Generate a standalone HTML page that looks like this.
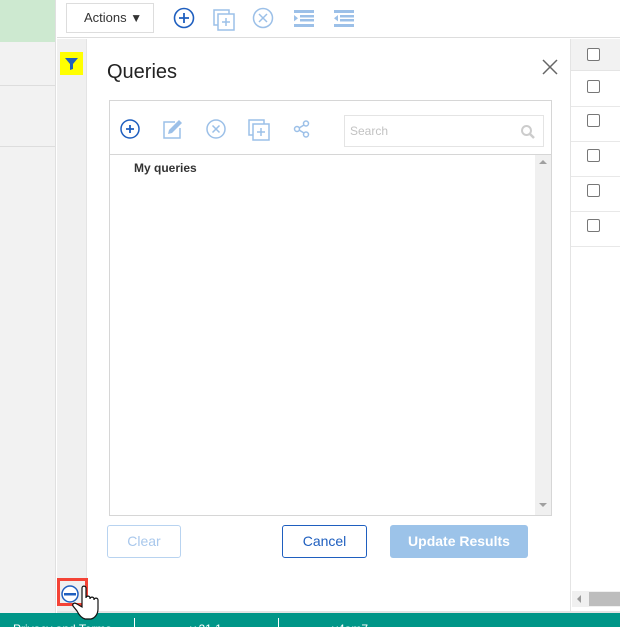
<!DOCTYPE html>
<html><head><meta charset="utf-8"><style>
*{box-sizing:border-box;margin:0;padding:0}
body{width:620px;height:627px;overflow:hidden;position:relative;background:#fff;font-family:"Liberation Sans",Arial,sans-serif}
.a{position:absolute}
</style></head><body>
<div class="a" style="left:0;top:0;width:56px;height:613px;background:#f2f2f2;border-right:1px solid #e0e0e0"></div>
<div class="a" style="left:0;top:0;width:55px;height:42px;background:#cde9d0"></div>
<div class="a" style="left:0;top:85px;width:55px;height:1px;background:#ddd"></div>
<div class="a" style="left:0;top:146px;width:55px;height:1px;background:#ddd"></div>
<div class="a" style="left:57px;top:0;width:563px;height:38px;background:#fff;border-bottom:1px solid #ddd"></div>
<div class="a" style="left:66px;top:3px;width:88px;height:30px;border:1px solid #ddd;font-size:13px;color:#333;line-height:28px;padding-left:17px">Actions <span style="font-size:12px">▼</span></div>
<svg class="a" style="left:170px;top:4px" width="190" height="28" viewBox="0 0 190 28">
<circle cx="14" cy="14" r="9.5" fill="none" stroke="#1f5fbf" stroke-width="1.6"/><path d="M14 9v10M9 14h10" stroke="#1f5fbf" stroke-width="1.8"/>
<g stroke="#9cc0e8" fill="none" stroke-width="1.5"><rect x="44" y="6" width="15" height="15"/><rect x="48" y="10" width="16" height="16" fill="#fff"/><path d="M56 14v8M52 18h8"/>
<circle cx="93" cy="14" r="9.5"/><path d="M89 10l8 8M97 10l-8 8"/></g>
<g fill="#9cc0e8"><rect x="124" y="6" width="20" height="3"/><rect x="130" y="11" width="14" height="2.5"/><rect x="130" y="15" width="14" height="2.5"/><rect x="124" y="20" width="20" height="3"/><path d="M124 11l4 3.2-4 3.2z"/>
<rect x="164" y="6" width="20" height="3"/><rect x="170" y="11" width="14" height="2.5"/><rect x="170" y="15" width="14" height="2.5"/><rect x="164" y="20" width="20" height="3"/><path d="M168 11l-4 3.2 4 3.2z"/></g>
</svg>
<div class="a" style="left:57px;top:39px;width:30px;height:574px;background:#f0f0f0;border-right:1px solid #e4e4e4"></div>
<div class="a" style="left:60px;top:52px;width:23px;height:23px;background:#ffff00"></div>
<svg class="a" style="left:64px;top:56px" width="15" height="15"><path d="M1 2h13l-5 6v5l-3 1V8z" fill="#1f5fbf"/></svg>
<div class="a" style="left:107px;top:61px;font-size:20px;color:#222">Queries</div>
<svg class="a" style="left:542px;top:59px" width="16" height="16"><path d="M1 1l14 14M15 1L1 15" stroke="#666" stroke-width="1.5"/></svg>
<div class="a" style="left:109px;top:100px;width:443px;height:416px;border:1px solid #d6d6d6"></div>
<div class="a" style="left:110px;top:154px;width:441px;height:1px;background:#d6d6d6"></div>
<svg class="a" style="left:118px;top:116px" width="200" height="28">
<circle cx="12" cy="13" r="9" fill="none" stroke="#1f5fbf" stroke-width="1.5"/><path d="M12 9v8M8 13h8" stroke="#1f5fbf" stroke-width="1.8"/>
<g stroke="#9cc0e8" fill="none" stroke-width="1.5"><path d="M57 6H46v16h16V12"/></g>
<path d="M50 18l1-4 10-10 3 3-10 10z" fill="#9cc0e8"/>
<g stroke="#9cc0e8" fill="none" stroke-width="1.5"><circle cx="98" cy="13" r="9"/><path d="M94.5 9.5l7 7M101.5 9.5l-7 7"/>
<rect x="131" y="4" width="15" height="15"/><rect x="135" y="8" width="16" height="16" fill="#fff"/><path d="M143 12v8M139 16h8"/>
<circle cx="179" cy="13" r="2.5"/><circle cx="188" cy="7.5" r="2.5"/><circle cx="188" cy="18.5" r="2.5"/><path d="M181 12l5-3M181 14l5 3"/></g>
</svg>
<div class="a" style="left:344px;top:115px;width:200px;height:32px;border:1px solid #e4e4e4;font-size:12px;color:#c2c2c2;padding:8px 5px">Search</div>
<svg class="a" style="left:520px;top:124px" width="16" height="16"><circle cx="6.5" cy="6.5" r="4.5" fill="none" stroke="#ccc" stroke-width="2"/><path d="M10 10l4 4" stroke="#ccc" stroke-width="2.5"/></svg>
<div class="a" style="left:134px;top:161px;font-size:12px;font-weight:bold;color:#333">My queries</div>
<div class="a" style="left:535px;top:155px;width:16px;height:360px;background:#f0f0f0"></div>
<div class="a" style="left:539px;top:160px;border:4px solid transparent;border-bottom:4px solid #a0a0a0;border-top:0"></div>
<div class="a" style="left:539px;top:503px;border:4px solid transparent;border-top:4px solid #a0a0a0;border-bottom:0"></div>
<div class="a" style="left:107px;top:525px;width:74px;height:33px;border:1px solid #b8d3f0;border-radius:3px;color:#a9c8ec;font-size:14px;text-align:center;line-height:31px">Clear</div>
<div class="a" style="left:282px;top:525px;width:85px;height:33px;border:1px solid #1f5fbf;border-radius:3px;color:#1f5fbf;font-size:14px;text-align:center;line-height:31px">Cancel</div>
<div class="a" style="left:390px;top:525px;width:138px;height:33px;background:#9cc3e9;border-radius:3px;color:#fff;font-weight:bold;font-size:14px;text-align:center;line-height:33px">Update Results</div>
<div class="a" style="left:570px;top:39px;width:1px;height:574px;background:#e4e4e4"></div>
<div class="a" style="left:571px;top:39px;width:49px;height:32px;background:#f2f2f2;border-bottom:1px solid #e4e4e4"></div>
<div class="a" style="left:587px;top:48px;width:13px;height:13px;border:1px solid #777;border-radius:2px;background:#fff"></div>
<div class="a" style="left:587px;top:80px;width:13px;height:13px;border:1px solid #777;border-radius:2px"></div>
<div class="a" style="left:571px;top:106px;width:49px;height:1px;background:#e8e8e8"></div>
<div class="a" style="left:587px;top:114px;width:13px;height:13px;border:1px solid #777;border-radius:2px"></div>
<div class="a" style="left:571px;top:141px;width:49px;height:1px;background:#e8e8e8"></div>
<div class="a" style="left:587px;top:149px;width:13px;height:13px;border:1px solid #777;border-radius:2px"></div>
<div class="a" style="left:571px;top:176px;width:49px;height:1px;background:#e8e8e8"></div>
<div class="a" style="left:587px;top:184px;width:13px;height:13px;border:1px solid #777;border-radius:2px"></div>
<div class="a" style="left:571px;top:211px;width:49px;height:1px;background:#e8e8e8"></div>
<div class="a" style="left:587px;top:219px;width:13px;height:13px;border:1px solid #777;border-radius:2px"></div>
<div class="a" style="left:571px;top:246px;width:49px;height:1px;background:#e8e8e8"></div>
<div class="a" style="left:572px;top:591px;width:48px;height:16px;background:#f0f0f0"></div>
<div class="a" style="left:589px;top:592px;width:31px;height:14px;background:#bdbdbd"></div>
<div class="a" style="left:577px;top:595px;border:4px solid transparent;border-right:4px solid #999;border-left:0"></div>
<div class="a" style="left:57px;top:611px;width:563px;height:2px;background:#e4e4e4"></div>
<div class="a" style="left:0;top:613px;width:620px;height:14px;background:#009688;color:#fff;font-size:12px">
<span class="a" style="left:13px;top:9px">Privacy and Terms</span>
<span class="a" style="left:134px;top:5px;width:1px;height:9px;background:#fff"></span>
<span class="a" style="left:190px;top:9px">v.21.1</span>
<span class="a" style="left:278px;top:5px;width:1px;height:9px;background:#fff"></span>
<span class="a" style="left:332px;top:9px">v4am7</span>
</div>
<div class="a" style="left:57px;top:578px;width:31px;height:28px;border:3px solid #f44336"></div>
<svg class="a" style="left:60px;top:582px;z-index:5" width="40" height="45">
<circle cx="10" cy="12" r="8" fill="#fff" stroke="#1f5fbf" stroke-width="1.5"/><rect x="4" y="11" width="12" height="2.5" fill="#1f5fbf"/>
<path d="M22 25V6c0-2.5 4-2.5 4 0v10c0-2.5 4-2.5 4 0v1c0-2.5 4-2.5 4 0v1c0-2.5 4-2.5 4 0v9c0 5-3 9-7 10h-6c-3-1-6-4-8-8l-4-5c-1-2 1-4 4-2z" fill="#fff" stroke="#111" stroke-width="1.2"/>
</svg>
</body></html>
